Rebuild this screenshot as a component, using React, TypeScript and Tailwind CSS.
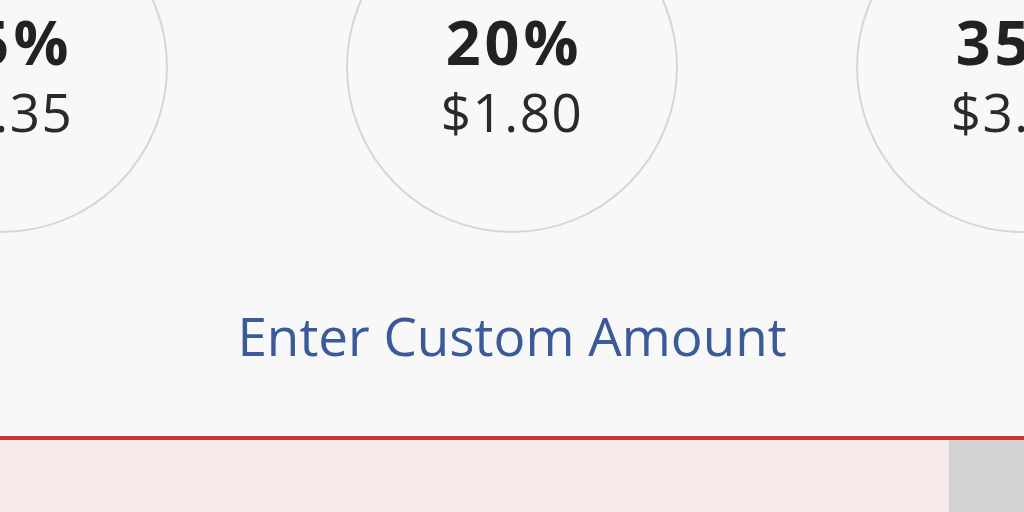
const tips = [
  { pct: '15%', amt: '$1.35' },
  { pct: '20%', amt: '$1.80' },
  { pct: '35%', amt: '$3.15' },
];

export default function App() {
  return (
    <div
      className="w-[1024px] h-[512px] overflow-hidden bg-[#f8f8f8] flex flex-col"
      style={{ fontFamily: '"Open Sans", "Noto Sans", sans-serif' }}
    >
      {/* tip choices */}
      <div className="flex justify-center gap-[178px] -mt-[99px]">
        {tips.map((t) => (
          <button
            key={t.pct}
            className="shrink-0 w-[332px] h-[332px] rounded-full border-2 border-[#d6d6d6] flex flex-col items-center pt-[108px] text-[#222]"
          >
            <span className="text-[61px] font-bold leading-none tracking-[4px] pl-[4px]">{t.pct}</span>
            <span className="text-[53px] leading-none mt-[13px] tracking-[1.5px] text-[#2a2a2a]">{t.amt}</span>
          </button>
        ))}
      </div>

      <div className="flex justify-center mt-[76px]">
        <span className="text-[53px] leading-none text-[#3b5a9a]">Enter Custom Amount</span>
      </div>

      {/* bottom bar */}
      <div className="mt-auto h-[76px] border-t-4 border-[#c8362e] flex">
        <div className="flex-1 bg-[#f6e9e9]" />
        <div className="w-[75px] bg-[#d2d2d2]" />
      </div>
    </div>
  );
}
